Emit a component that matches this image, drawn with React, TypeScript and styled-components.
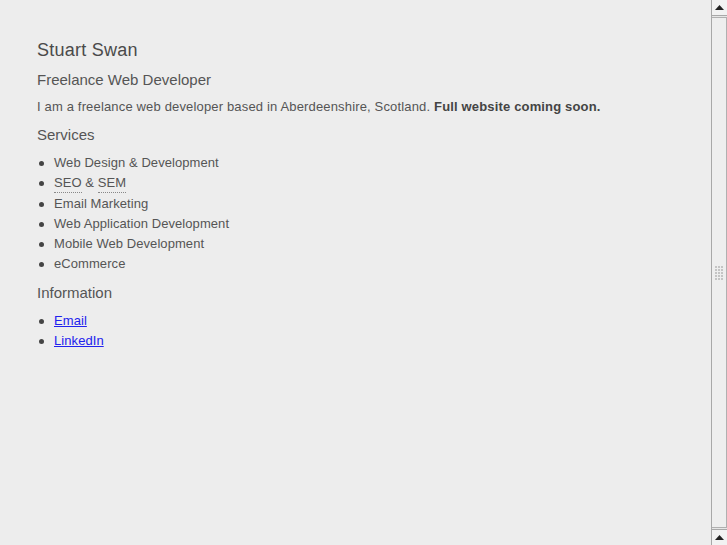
import React from 'react';
import styled, { createGlobalStyle } from 'styled-components';

const GlobalStyle = createGlobalStyle`
  html, body {
    margin: 0;
    padding: 0;
    height: 100%;
    overflow: hidden;
    background: #ededed;
  }
  #root {
    height: 100%;
  }
`;

const Page = styled.div`
  display: flex;
  flex-direction: row;
  height: 100vh;
  font-family: 'Liberation Sans', Arial, sans-serif;
  color: #555;
`;

const Content = styled.main`
  flex: 1;
  display: flex;
  flex-direction: column;
  gap: 8px;
  padding: 39px 0 0 37px;
`;

const Name = styled.h1`
  margin: 0 0 1px;
  font-size: 18px;
  line-height: 22px;
  font-weight: normal;
  letter-spacing: 0.25px;
  color: #4a4a4a;
`;

const Heading = styled.h2`
  margin: 0;
  font-size: 15px;
  line-height: 20px;
  font-weight: normal;
  color: #555;
`;

const Intro = styled.p`
  margin: 0 0 1px;
  font-size: 13px;
  line-height: 18px;
  letter-spacing: 0.16px;
  strong {
    color: #444;
  }
`;

const List = styled.ul`
  margin: 0;
  padding: 0;
  list-style: none;
`;

const Item = styled.li`
  position: relative;
  padding-left: 17px;
  font-size: 13px;
  line-height: 20.3px;
  letter-spacing: 0.07px;
  &::before {
    content: '';
    position: absolute;
    left: 2px;
    top: 8px;
    width: 5px;
    height: 5px;
    border-radius: 50%;
    background: #444;
  }
`;

const Abbr = styled.abbr`
  text-decoration: none;
  padding-bottom: 2px;
  border-bottom: 1px dotted #888;
`;

const Link = styled.a`
  color: #2222ee;
  text-decoration: underline;
`;

/* fake old-style scrollbar on the right edge */
const Scrollbar = styled.div`
  width: 15px;
  display: flex;
  flex-direction: column;
  border-left: 1px solid #a8a8a8;
  background: #e6e6e6;
`;

const ArrowButton = styled.div`
  height: 15px;
  display: flex;
  align-items: center;
  justify-content: center;
  border-bottom: 1px solid #a8a8a8;
  background: #f2f2f2;
  &:last-child {
    border-bottom: none;
    border-top: 1px solid #a8a8a8;
  }
`;

const Thumb = styled.div`
  flex: 1;
  display: flex;
  align-items: center;
  justify-content: center;
  margin: 1px 0;
  border: 1px solid #b0b0b0;
  border-left: none;
  background: #eeeeee;
`;

const Grip = styled.div`
  display: grid;
  grid-template-columns: repeat(3, 2px);
  gap: 1px;
  div {
    width: 2px;
    height: 2px;
    background: #c4c4c4;
  }
`;

const Arrow = () => (
  <svg width="9" height="5" viewBox="0 0 9 5">
    <polygon points="0,5 9,5 4.5,0" fill="#222" />
  </svg>
);

const services = [
  'Web Design & Development',
  null,
  'Email Marketing',
  'Web Application Development',
  'Mobile Web Development',
  'eCommerce',
];

const App: React.FC = () => {
  return (
    <>
      <GlobalStyle />
      <Page>
        <Content>
          <Name>Stuart Swan</Name>
          <Heading>Freelance Web Developer</Heading>
          <Intro>
            I am a freelance web developer based in Aberdeenshire, Scotland.{' '}
            <strong>Full website coming soon.</strong>
          </Intro>
          <Heading>Services</Heading>
          <List>
            {services.map((s, i) =>
              s ? (
                <Item key={i}>{s}</Item>
              ) : (
                <Item key={i}>
                  <Abbr title="Search Engine Optimisation">SEO</Abbr> &amp;{' '}
                  <Abbr title="Search Engine Marketing">SEM</Abbr>
                </Item>
              )
            )}
          </List>
          <Heading>Information</Heading>
          <List>
            <Item>
              <Link href="#">Email</Link>
            </Item>
            <Item>
              <Link href="#">LinkedIn</Link>
            </Item>
          </List>
        </Content>
        <Scrollbar>
          <ArrowButton>
            <Arrow />
          </ArrowButton>
          <Thumb>
            <Grip>
              {Array.from({ length: 15 }).map((_, i) => (
                <div key={i} />
              ))}
            </Grip>
          </Thumb>
          <ArrowButton>
            <Arrow />
          </ArrowButton>
        </Scrollbar>
      </Page>
    </>
  );
};

export default App;
